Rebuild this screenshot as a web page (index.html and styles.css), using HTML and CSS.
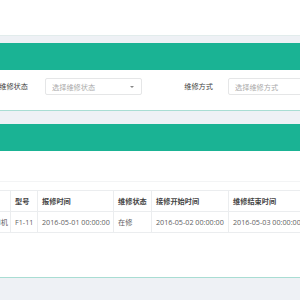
FILE: index.html
```html
<!DOCTYPE html>
<html lang="zh-CN">
<head>
    <meta charset="UTF-8">
    <title>维修记录</title>
    <link rel="stylesheet" href="styles.css">
</head>
<body>

    <div class="panel-tail"></div>

    <div class="panel">
        <div class="panel-head"></div>
        <div class="panel-body filters">
            <label class="filter-label">维修状态</label>
            <div class="select">
                <span>选择维修状态</span>
                <i class="caret"></i>
            </div>
            <label class="filter-label second">维修方式</label>
            <div class="select">
                <span>选择维修方式</span>
                <i class="caret"></i>
            </div>
        </div>
    </div>

    <div class="panel">
        <div class="panel-head"></div>
        <div class="panel-body list">
            <div class="toolbar"></div>
            <table class="grid">
                <colgroup>
                    <col class="c1">
                    <col class="c2">
                    <col class="c3">
                    <col class="c4">
                    <col class="c5">
                    <col class="c6">
                </colgroup>
                <thead>
                    <tr>
                        <th></th>
                        <th>型号</th>
                        <th>报修时间</th>
                        <th>维修状态</th>
                        <th>接修开始时间</th>
                        <th>维修结束时间</th>
                    </tr>
                </thead>
                <tbody>
                    <tr>
                        <td class="name">打印机</td>
                        <td>F1-11</td>
                        <td>2016-05-01 00:00:00</td>
                        <td>在修</td>
                        <td>2016-05-02 00:00:00</td>
                        <td>2016-05-03 00:00:00</td>
                    </tr>
                </tbody>
            </table>
        </div>
    </div>

</body>
</html>
```

FILE: styles.css
```css
body {
    margin: 0;
    background: #eef1f5;
    font-family: "Open Sans", "Noto Sans CJK SC", sans-serif;
    font-size: 7.2px;
    color: #5f6264;
    overflow: hidden;
}
.panel-tail {
    height: 35px;
    background: white;
    border-bottom: 1px solid #e2ecec;
    margin-bottom: 7px;
}
.panel {
    margin-bottom: 13px;
}
.panel-head {
    height: 27px;
    background: #1ab394;
}
.panel-body {
    background: white;
    border-bottom: 1px solid #a9ddd3;
}
.filters {
    display: flex;
    align-items: flex-start;
    height: 32px;
    padding-top: 8px;
    margin-left: -16px;
    white-space: nowrap;
}
.filter-label {
    width: 44px;
    line-height: 17px;
    text-align: right;
    color: #444;
    margin-right: 17px;
    flex-shrink: 0;
}
.filter-label.second {
    margin-left: 27px;
    margin-right: 15px;
}
.select {
    display: flex;
    align-items: center;
    justify-content: space-between;
    width: 97px;
    height: 17px;
    box-sizing: border-box;
    padding: 0 7px 0 6px;
    border: 1px solid #e5e6e7;
    border-radius: 2px;
    color: #aaa;
    flex-shrink: 0;
}
.caret {
    width: 0;
    height: 0;
    border-left: 2px solid transparent;
    border-right: 2px solid transparent;
    border-top: 2px solid #888;
}
.list {
    height: 126px;
}
.toolbar {
    height: 30px;
    border-bottom: 1px solid #f3f4f5;
    margin-bottom: 8px;
}
.grid {
    border-collapse: collapse;
    table-layout: fixed;
    width: 349px;
    margin-left: -31px;
    white-space: nowrap;
}
.grid th, .grid td {
    height: 20px;
    padding: 0 4px;
    border: 1px solid #ebedef;
    text-align: left;
    overflow: hidden;
}
.grid th {
    color: #444;
    font-weight: bold;
}
.grid td.name {
    text-align: right;
    padding: 0 2px 0 0;
}
.c1 { width: 41px; }
.c2 { width: 27px; }
.c3 { width: 76px; }
.c4 { width: 38px; }
.c5 { width: 77px; }
.c6 { width: 90px; }
```
